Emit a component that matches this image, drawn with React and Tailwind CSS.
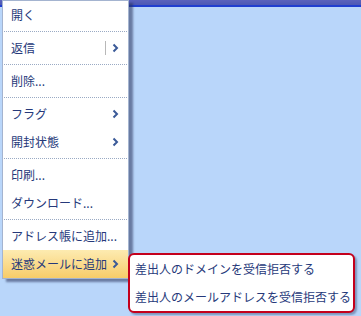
import React from "react";

const Chevron = () => (
  <svg width="7" height="10" viewBox="0 0 7 10" className="shrink-0">
    <path d="M1.5 1.5 L5 5 L1.5 8.5" fill="none" stroke="#3b5a98" strokeWidth="2" />
  </svg>
);

const Sep = () => <div className="mx-[1px] my-[2px] border-t border-dotted border-[#9aaac4]" />;

const Item = ({ label, arrow, split, active }) => (
  <div
    className={
      "flex items-center h-[28px] pl-[8px] pr-[9px] " +
      (active ? "bg-gradient-to-b from-[#fdebb0] to-[#f7cc68]" : "")
    }
  >
    <span className="flex-1">{label}</span>
    {split && <span className="w-px h-[14px] bg-[#b8b8b8] mr-[6px]" />}
    {arrow && <Chevron />}
  </div>
);

export default function App() {
  return (
    <div
      className="relative w-[361px] h-[316px] bg-[#b9d6fa] overflow-hidden text-[12px] text-[#26397a]"
      style={{ fontFamily: '"Noto Sans CJK JP", "Noto Sans", sans-serif' }}
    >
      {/* top bar */}
      <div className="h-[7px] bg-gradient-to-b from-[#5a62bc] to-[#4c58b4] border-b-2 border-[#1f3ed0]" />

      {/* main menu */}
      <div className="absolute left-[2px] top-0 w-[127px] bg-white border border-[#a4b4d0] shadow-[4px_3px_2px_rgba(40,50,90,0.55)]">
        <Item label="開く" />
        <Sep />
        <Item label="返信" arrow split />
        <Sep />
        <Item label="削除..." />
        <Sep />
        <Item label="フラグ" arrow />
        <Item label="開封状態" arrow />
        <Sep />
        <Item label="印刷..." />
        <Item label="ダウンロード..." />
        <Sep />
        <Item label="アドレス帳に追加..." />
        <Item label="迷惑メールに追加" arrow active />
      </div>

      {/* submenu */}
      <div className="absolute left-[128px] top-[253px] w-[227px] h-[60px] bg-white border-2 border-[#c4001c] rounded-[6px] shadow-[2px_2px_2px_rgba(40,50,90,0.4)] flex flex-col justify-around pl-[5px]">
        <div>差出人のドメインを受信拒否する</div>
        <div>差出人のメールアドレスを受信拒否する</div>
      </div>
    </div>
  );
}
